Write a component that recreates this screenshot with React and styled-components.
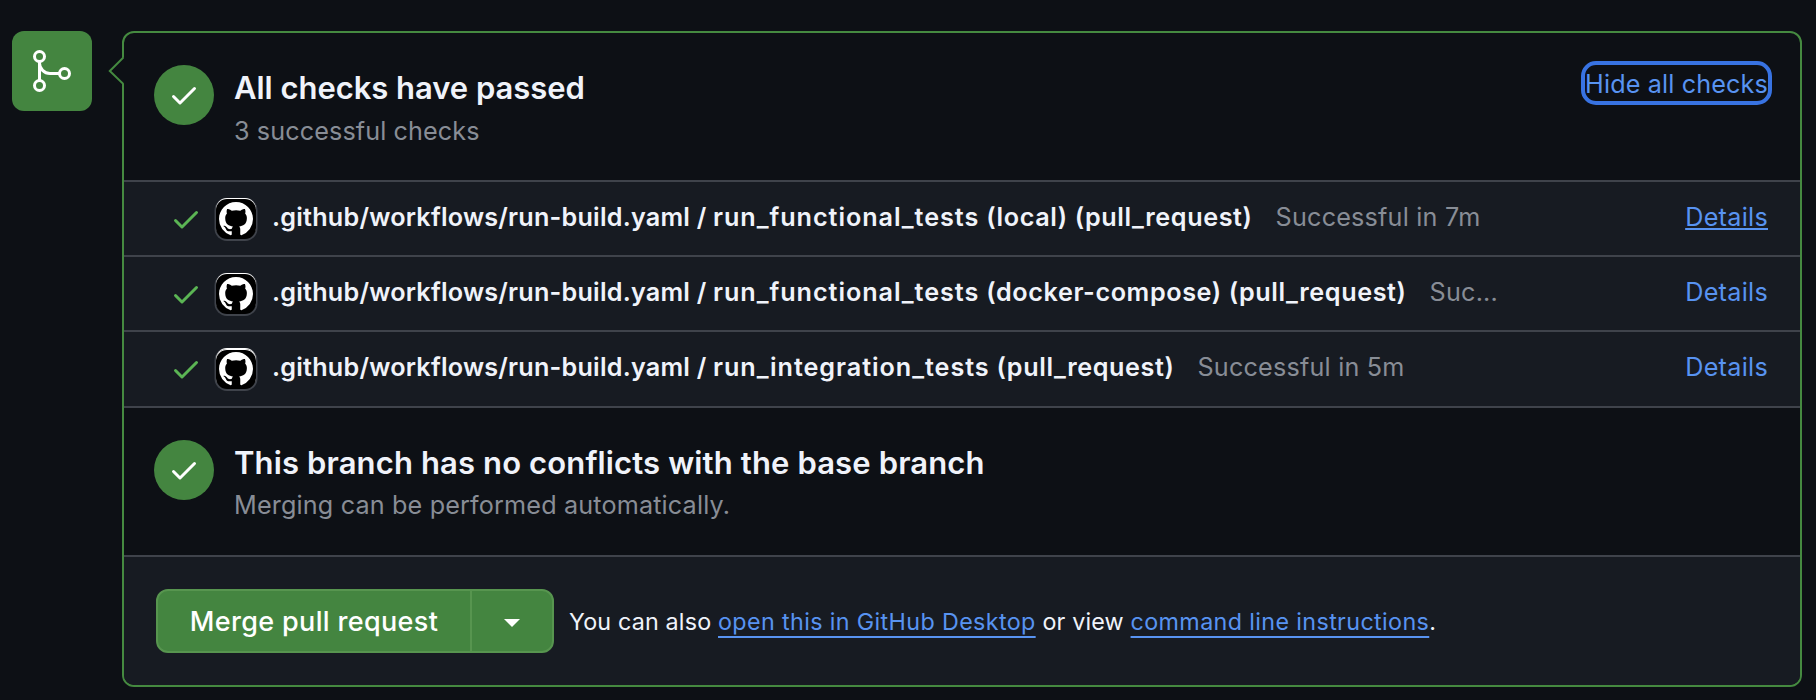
import React from "react";
import styled, { createGlobalStyle, ThemeProvider } from "styled-components";

const theme = {
  canvas: "#0d1015",
  subtle: "#171b22",
  line: "#3f434b",
  text: "#f0f3fa",
  muted: "#888d96",
  link: "#5893f1",
  focus: "#3873e2",
  green: "#448540",
  greenEdge: "#57954f",
  greenLine: "#458a40",
  check: "#5bb554",
};

const GlobalStyle = createGlobalStyle`
  * { box-sizing: border-box; }
  body {
    margin: 0;
    background: ${theme.canvas};
    font-family: Inter, "Liberation Sans", sans-serif;
  }
`;

const Page = styled.main`
  display: flex;
  align-items: flex-start;
  gap: 30px;
  padding: 31px 14px 13px 12px;
  color: ${(p) => p.theme.text};
`;

const Badge = styled.div`
  display: flex;
  align-items: center;
  justify-content: center;
  width: 80px;
  height: 80px;
  border-radius: 12px;
  background: ${(p) => p.theme.green};
`;

const Card = styled.section`
  position: relative;
  flex: 1;
  min-width: 0;
  border: 2px solid ${(p) => p.theme.greenLine};
  border-radius: 12px;
`;

const Pointer = styled.svg`
  position: absolute;
  left: -16px;
  top: 22px;
`;

const StatusSection = styled.div`
  display: flex;
  align-items: flex-start;
  height: 149px;
  padding: 32px 28px 0 30px;
  border-bottom: 2px solid ${(p) => p.theme.line};
`;

const StatusCircle = styled.div`
  display: flex;
  align-items: center;
  justify-content: center;
  width: 60px;
  height: 60px;
  border-radius: 50%;
  background: ${(p) => p.theme.green};
`;

const StatusText = styled.div`
  flex: 1;
  margin-left: 20px;
  padding-top: 3px;
`;

const Title = styled.h3`
  margin: 0;
  font-size: 31px;
  line-height: 40px;
  font-weight: 600;
  letter-spacing: ${(p) => p.$tracking}px;
`;

const Subtitle = styled.p`
  margin: ${(p) => p.$gap}px 0 0;
  font-size: 25.2px;
  line-height: 42px;
  letter-spacing: ${(p) => p.$tracking}px;
  color: ${(p) => p.theme.muted};
`;

const ToggleButton = styled.button`
  width: 191px;
  height: 44px;
  margin-top: -4px;
  padding: 2px 0 0;
  border: 4px solid ${(p) => p.theme.focus};
  border-radius: 15px;
  background: transparent;
  color: ${(p) => p.theme.link};
  font: 400 25.2px/34px Inter, sans-serif;
  letter-spacing: 0.13px;
  white-space: nowrap;
`;

const CheckRow = styled.div`
  display: flex;
  align-items: center;
  height: ${(p) => (p.$last ? 76 : 75)}px;
  padding: 1px 32px ${(p) => (p.$last ? 1 : 0)}px 46px;
  border-bottom: 2px solid ${(p) => p.theme.line};
  background: ${(p) => p.theme.subtle};
`;

const Avatar = styled.div`
  display: flex;
  align-items: center;
  justify-content: center;
  width: 40px;
  height: 40px;
  margin: 0 16px 0 14px;
  border-radius: 11px;
  background: #000;
  box-shadow: ${(p) => (p.$bright ? "inset 0 1px 0 #fff, " : "")}0 -1px 0 0 #fff,
    0 0.5px 0 1.5px ${(p) => p.theme.line};
`;

const CheckName = styled.strong`
  margin-bottom: 4px;
  font-size: 25.2px;
  line-height: 32px;
  font-weight: 600;
  letter-spacing: 0.22px;
  white-space: nowrap;
`;

const JobName = styled.span`
  letter-spacing: 0.95px;
`;

const JobContext = styled.span`
  letter-spacing: 0.6px;
`;

const CheckResult = styled.span`
  flex: 1;
  margin: 0 0 4px 23px;
  font-size: 25.2px;
  line-height: 32px;
  letter-spacing: 0.2px;
  color: ${(p) => p.theme.muted};
`;

const DetailsLink = styled.a`
  margin-bottom: 4px;
  font-size: 25.2px;
  line-height: 32px;
  letter-spacing: 0.28px;
  color: ${(p) => p.theme.link};
  text-decoration: ${(p) => (p.$underlined ? "underline" : "none")};
  text-decoration-thickness: 2px;
  text-underline-offset: 2px;
  text-decoration-skip-ink: none;
`;

const Footer = styled.div`
  display: flex;
  align-items: center;
  height: 128px;
  padding: 0 32px;
  border-radius: 0 0 10px 10px;
  background: ${(p) => p.theme.subtle};
`;

const ButtonGroup = styled.div`
  display: flex;
  width: 398px;
  height: 64px;
  border: 2px solid ${(p) => p.theme.greenEdge};
  border-radius: 12px;
  background: ${(p) => p.theme.green};
`;

const MergeButton = styled.button`
  flex: 1;
  padding: 2px 0 0;
  border: 0;
  background: transparent;
  color: #fff;
  font: 500 27px/32px Inter, sans-serif;
  letter-spacing: 0.34px;
`;

const MenuButton = styled.button`
  display: flex;
  align-items: center;
  justify-content: center;
  width: 82px;
  padding: 4px 0 0;
  border: 0;
  border-left: 2px solid ${(p) => p.theme.greenEdge};
  background: transparent;
`;

const Hint = styled.p`
  margin: 0 0 0 15px;
  padding-top: 1px;
  font-size: 23.3px;
  line-height: 32px;
  letter-spacing: 0.17px;
  white-space: nowrap;
`;

const HintLink = styled.a`
  letter-spacing: 0.37px;
  color: ${(p) => p.theme.link};
  text-decoration: underline;
  text-decoration-thickness: 2px;
  text-underline-offset: 6px;
  text-decoration-skip-ink: none;
`;

const CheckIcon = ({ color }) => (
  <svg width="32" height="32" viewBox="0 0 16 16" fill={color}>
    <path d="M13.78 4.22a.75.75 0 0 1 0 1.06l-7.25 7.25a.75.75 0 0 1-1.06 0L2.22 9.28a.751.751 0 0 1 .018-1.042.751.751 0 0 1 1.042-.018L6 10.94l6.72-6.72a.75.75 0 0 1 1.06 0Z" />
  </svg>
);

const MergeIcon = () => (
  <svg width="48" height="48" viewBox="0 0 24 24" fill="none" stroke="#fff" strokeWidth="1.5">
    <circle cx="5.75" cy="4.75" r="2.5" />
    <circle cx="5.75" cy="19.25" r="2.5" />
    <circle cx="18.25" cy="13.25" r="2.5" />
    <path d="M5.75 7.25v9.5M5.75 8A5.25 5.25 0 0 0 11 13.25h4.75" />
  </svg>
);

const GitHubMark = () => (
  <svg width="34" height="34" viewBox="0 0 16 16" fill="#fff">
    <path d="M8 0c4.42 0 8 3.58 8 8a8.013 8.013 0 0 1-5.45 7.59c-.4.08-.55-.17-.55-.38 0-.27.01-1.13.01-2.2 0-.75-.25-1.23-.54-1.48 1.78-.2 3.65-.88 3.65-3.95 0-.88-.31-1.59-.82-2.15.08-.2.36-1.02-.08-2.12 0 0-.67-.22-2.2.82-.64-.18-1.32-.27-2-.27-.68 0-1.36.09-2 .27-1.53-1.03-2.2-.82-2.2-.82-.44 1.1-.16 1.92-.08 2.12-.51.56-.82 1.28-.82 2.15 0 3.06 1.86 3.75 3.64 3.95-.23.2-.44.55-.51 1.07-.46.21-1.61.55-2.33-.66-.15-.24-.6-.83-1.23-.82-.67.01-.27.38.01.53.34.19.73.9.82 1.13.16.45.68 1.31 2.69.94 0 .67.01 1.3.01 1.49 0 .21-.15.45-.55.38A7.995 7.995 0 0 1 0 8c0-4.42 3.58-8 8-8Z" />
  </svg>
);

const checks = [
  { job: "run_functional_tests", context: " (local) (pull_request)", result: "Successful in 7m" },
  { job: "run_functional_tests", context: " (docker-compose) (pull_request)", result: "Suc..." },
  { job: "run_integration_tests", context: " (pull_request)", result: "Successful in 5m" },
];

export default function App() {
  return (
    <ThemeProvider theme={theme}>
      <GlobalStyle />
      <Page>
        <Badge>
          <MergeIcon />
        </Badge>
        <Card>
          <Pointer width="16" height="32" viewBox="0 0 16 32">
            <path d="M16 2.8h-1L2 16l13 12.6h1Z" fill={theme.canvas} />
            <path d="M15.4 2.4 1.8 16l13.6 13" fill="none" stroke={theme.greenLine} strokeWidth="2" />
          </Pointer>
          <StatusSection>
            <StatusCircle>
              <CheckIcon color="#fff" />
            </StatusCircle>
            <StatusText>
              <Title $tracking={-0.04}>All checks have passed</Title>
              <Subtitle $gap={2} $tracking={0.1}>3 successful checks</Subtitle>
            </StatusText>
            <ToggleButton>Hide all checks</ToggleButton>
          </StatusSection>
          {checks.map((check, i) => (
            <CheckRow key={i} $last={i === checks.length - 1}>
              <CheckIcon color={theme.check} />
              <Avatar $bright={i === checks.length - 1}>
                <GitHubMark />
              </Avatar>
              <CheckName>
                .github/workflows/run-build.yaml / <JobName>{check.job}</JobName>
                <JobContext>{check.context}</JobContext>
              </CheckName>
              <CheckResult>{check.result}</CheckResult>
              <DetailsLink $underlined={i === 0}>Details</DetailsLink>
            </CheckRow>
          ))}
          <StatusSection>
            <StatusCircle>
              <CheckIcon color="#fff" />
            </StatusCircle>
            <StatusText>
              <Title $tracking={0.13}>This branch has no conflicts with the base branch</Title>
              <Subtitle $gap={1} $tracking={0.15}>Merging can be performed automatically.</Subtitle>
            </StatusText>
          </StatusSection>
          <Footer>
            <ButtonGroup>
              <MergeButton>Merge pull request</MergeButton>
              <MenuButton aria-label="Select merge method">
                <svg width="16" height="8" viewBox="0 0 16 8" fill="#fff">
                  <path d="M0 0h16L8 8Z" />
                </svg>
              </MenuButton>
            </ButtonGroup>
            <Hint>
              You can also <HintLink>open this in GitHub Desktop</HintLink> or view{" "}
              <HintLink>command line instructions</HintLink>.
            </Hint>
          </Footer>
        </Card>
      </Page>
    </ThemeProvider>
  );
}
